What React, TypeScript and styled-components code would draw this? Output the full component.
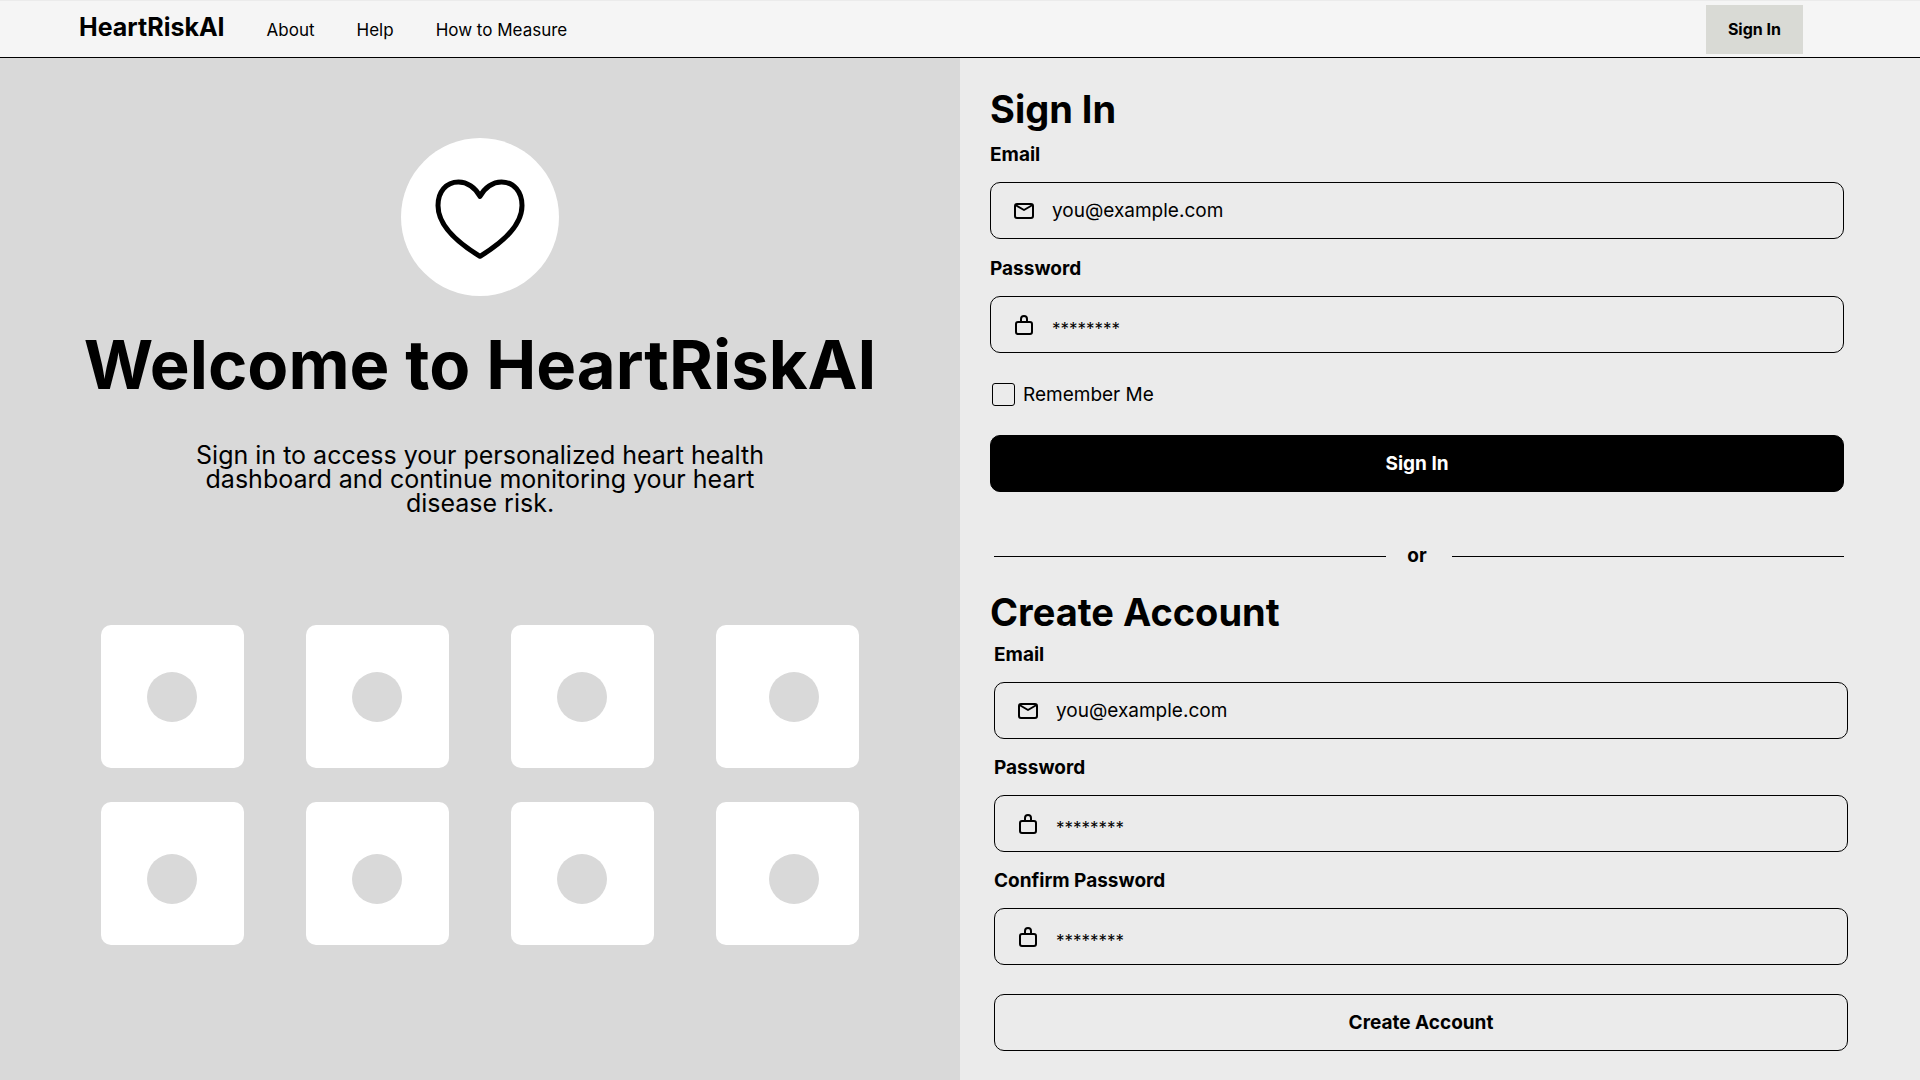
import React from 'react';
import styled, { createGlobalStyle } from 'styled-components';

const GlobalStyle = createGlobalStyle`
  *, *::before, *::after { box-sizing: border-box; }
  body {
    margin: 0;
    background: #ebebeb;
    color: #000;
    font-family: Inter, "Open Sans", sans-serif;
  }
  h1, h2, p { margin: 0; }
  button, input { font: inherit; color: inherit; }
`;

const Header = styled.header`
  display: flex;
  align-items: center;
  justify-content: space-between;
  height: 58px;
  padding: 0 117px 0 79px;
  background: #f5f5f5;
  border-top: 1px solid #ebebeb;
  border-bottom: 1px solid #000;
`;

const Nav = styled.nav`
  display: flex;
  align-items: baseline;
  gap: 42px;
  padding-bottom: 3px;
`;

const Logo = styled.a`
  color: inherit;
  text-decoration: none;
  font-size: 25px;
  line-height: 28px;
  font-weight: 700;
`;

const NavLink = styled.a`
  color: inherit;
  text-decoration: none;
  font-size: 17px;
  line-height: 24px;
`;

const HeaderButton = styled.button`
  height: 49px;
  padding: 0 22px;
  border: 0;
  background: #d9dad5;
  font-size: 16px;
  font-weight: 700;
  cursor: pointer;
`;

const Main = styled.main`
  display: grid;
  grid-template-columns: 1fr 1fr;
  min-height: calc(100vh - 58px);
`;

const Intro = styled.section`
  display: flex;
  flex-direction: column;
  align-items: center;
  padding: 80px 24px 28px;
  background: #d9d9d9;
`;

const HeartBadge = styled.div`
  display: grid;
  place-items: center;
  width: 158px;
  height: 158px;
  padding-top: 4px;
  border-radius: 50%;
  background: #fff;
`;

const Title = styled.h1`
  margin-top: 29px;
  font-size: 67px;
  line-height: 80px;
  font-weight: 700;
  text-align: center;
`;

const Lead = styled.p`
  max-width: 600px;
  margin-top: 38px;
  font-size: 25px;
  line-height: 24px;
  text-align: center;
`;

const Tiles = styled.div`
  display: grid;
  grid-template-columns: repeat(4, 143px);
  gap: 34px 62px;
  margin-top: 110px;
`;

const Tile = styled.div<{ $lower: boolean; $right: boolean }>`
  display: grid;
  place-items: center;
  height: 143px;
  padding-top: ${(p) => (p.$lower ? 10 : 0)}px;
  padding-left: ${(p) => (p.$right ? 14 : 0)}px;
  padding-right: 1px;
  border-radius: 10px;
  background: #fff;
`;

const Dot = styled.span`
  width: 50px;
  height: 50px;
  border-radius: 50%;
  background: #d9d9d9;
`;

const Account = styled.section`
  padding: 29px 72px 28px 30px;
  background: #ebebeb;
`;

const FormTitle = styled.h2<{ $gap: number }>`
  margin-bottom: ${(p) => p.$gap}px;
  font-size: 38px;
  line-height: 44px;
  font-weight: 700;
`;

const Form = styled.form<{ $gap: number; $inset?: boolean }>`
  display: flex;
  flex-direction: column;
  gap: ${(p) => p.$gap}px;
  margin: ${(p) => (p.$inset ? '0 0 0 4px' : '0 4px 0 0')};
`;

const Field = styled.div`
  display: flex;
  flex-direction: column;
  gap: 15px;
`;

const FieldLabel = styled.label`
  font-size: 19px;
  line-height: 24px;
  font-weight: 700;
`;

const InputBox = styled.div`
  display: flex;
  align-items: center;
  gap: 16px;
  height: 57px;
  padding: 0 21px;
  border: 1px solid #000;
  border-radius: 10px;
`;

const IconSlot = styled.span`
  display: grid;
  place-items: center;
  width: 24px;
  height: 24px;
`;

const Input = styled.input`
  flex: 1;
  min-width: 0;
  height: 100%;
  padding: 0;
  border: 0;
  outline: 0;
  background: transparent;
  font-size: 19px;
  &::placeholder { color: #000; opacity: 1; }
`;

const PasswordInput = styled(Input)`
  padding-top: 8px;
  font-size: 17px;
`;

const Remember = styled.label`
  display: flex;
  align-items: center;
  gap: 8px;
  height: 24px;
  margin: 11px 0 11px;
  padding-left: 2px;
  font-size: 19px;
`;

const Checkbox = styled.input`
  appearance: none;
  width: 23px;
  height: 23px;
  margin: 0;
  border: 1px solid #000;
  border-radius: 3px;
  &:checked { background: #000; box-shadow: inset 0 0 0 4px #ebebeb; }
`;

const Submit = styled.button<{ $solid?: boolean }>`
  height: 57px;
  margin-top: ${(p) => (p.$solid ? 0 : 12)}px;
  border: 1px solid #000;
  border-radius: 10px;
  background: ${(p) => (p.$solid ? '#000' : 'transparent')};
  color: ${(p) => (p.$solid ? '#fff' : '#000')};
  font-size: 19px;
  font-weight: 700;
  cursor: pointer;
`;

const Divider = styled.div`
  display: flex;
  align-items: center;
  margin: 52px 4px 22px;
  font-size: 19px;
  line-height: 24px;
  font-weight: 700;
  &::before, &::after { content: ''; flex: 1; height: 1px; background: #000; }
`;

const DividerText = styled.span`
  padding: 0 25px 0 21px;
`;

const HeartIcon = () => (
  <svg width="90" height="80" viewBox="0 0 90 80" fill="none" stroke="#000" strokeWidth="5" strokeLinejoin="round" aria-hidden="true">
    <path d="M45 17.5C40.500 8.500 32 3 23.500 3C11 3 3 13 3 26.500C3 47 23 64 45 77.300C67 64 87 47 87 26.500C87 13 79 3 66.500 3C58 3 49.500 8.500 45 17.500Z" />
  </svg>
);

const MailIcon = () => (
  <svg width="20" height="16" viewBox="0 0 20 16" fill="none" stroke="#000" strokeWidth="2" strokeLinejoin="round" aria-hidden="true">
    <rect x="1" y="1" width="18" height="14" rx="2" />
    <path d="M1.500 2L10 7L18.500 2" />
  </svg>
);

const LockIcon = () => (
  <svg width="18" height="20" viewBox="0 0 18 20" fill="none" stroke="#000" strokeWidth="2" aria-hidden="true">
    <rect x="1" y="7" width="16" height="12" rx="2" />
    <path d="M6 7V4a3 3 0 0 1 6 0V7" />
  </svg>
);

const EmailField = ({ id }: { id: string }) => (
  <Field>
    <FieldLabel htmlFor={id}>Email</FieldLabel>
    <InputBox>
      <IconSlot><MailIcon /></IconSlot>
      <Input id={id} type="email" placeholder="you@example.com" />
    </InputBox>
  </Field>
);

const PasswordField = ({ id, label }: { id: string; label: string }) => (
  <Field>
    <FieldLabel htmlFor={id}>{label}</FieldLabel>
    <InputBox>
      <IconSlot><LockIcon /></IconSlot>
      <PasswordInput id={id} type="password" placeholder="********" />
    </InputBox>
  </Field>
);

const tiles = Array.from({ length: 8 }, (_, i) => i);

export default function App() {
  return (
    <>
      <GlobalStyle />
      <Header>
        <Nav>
          <Logo href="#">HeartRiskAI</Logo>
          <NavLink href="#about">About</NavLink>
          <NavLink href="#help">Help</NavLink>
          <NavLink href="#measure">How to Measure</NavLink>
        </Nav>
        <HeaderButton type="button">Sign In</HeaderButton>
      </Header>
      <Main>
        <Intro>
          <HeartBadge><HeartIcon /></HeartBadge>
          <Title>Welcome to HeartRiskAI</Title>
          <Lead>
            Sign in to access your personalized heart health dashboard and continue monitoring your heart disease risk.
          </Lead>
          <Tiles>
            {tiles.map((i) => (
              <Tile key={i} $lower={i >= 4} $right={i % 4 === 3}><Dot /></Tile>
            ))}
          </Tiles>
        </Intro>
        <Account>
          <FormTitle $gap={12}>Sign In</FormTitle>
          <Form $gap={18}>
            <EmailField id="signin-email" />
            <PasswordField id="signin-password" label="Password" />
            <Remember>
              <Checkbox type="checkbox" />
              Remember Me
            </Remember>
            <Submit type="button" $solid>Sign In</Submit>
          </Form>
          <Divider><DividerText>or</DividerText></Divider>
          <FormTitle $gap={9}>Create Account</FormTitle>
          <Form $gap={17} $inset>
            <EmailField id="create-email" />
            <PasswordField id="create-password" label="Password" />
            <PasswordField id="create-confirm" label="Confirm Password" />
            <Submit type="button">Create Account</Submit>
          </Form>
        </Account>
      </Main>
    </>
  );
}
